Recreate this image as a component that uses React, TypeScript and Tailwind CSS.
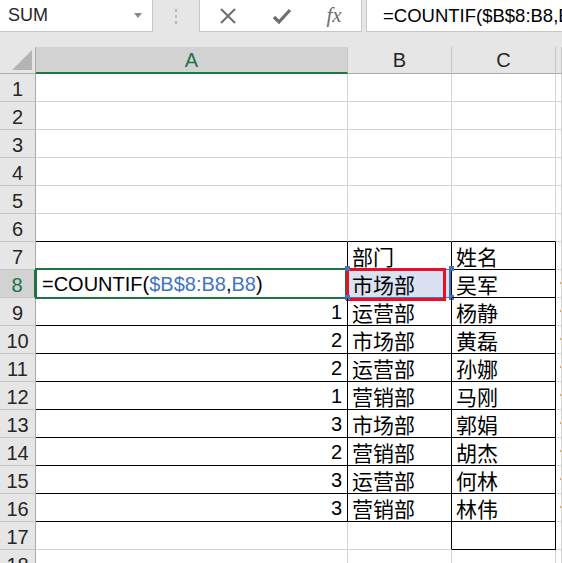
import React from 'react';

const latin = "font-['Liberation_Sans','Noto_Sans_CJK_SC',sans-serif]";
const cjk = "font-['Noto_Sans_CJK_SC',sans-serif]";

const counts = [1, 2, 2, 1, 3, 2, 3, 3];
const depts = ['运营部', '市场部', '运营部', '营销部', '市场部', '营销部', '运营部', '营销部'];
const names = ['杨静', '黄磊', '孙娜', '马刚', '郭娟', '胡杰', '何林', '林伟'];

const rows = Array.from({ length: 18 }, (_, i) => i + 1);

// which cells carry the black table borders
const blackBottom = (r: number, c: string) =>
  (c === 'A' || c === 'B') ? r >= 6 && r <= 16 : c === 'C' ? r >= 6 && r <= 17 : false;
const blackRight = (r: number, c: string) =>
  c === 'A' ? r >= 7 && r <= 16 : c === 'B' || c === 'C' ? r >= 7 && r <= 17 : false;

function cellClass(r: number, c: string) {
  return [
    'relative flex items-end border-r border-b border-[#d4d4d4] overflow-visible',
    blackBottom(r, c) ? 'border-b-black' : '',
    blackRight(r, c) ? 'border-r-black' : '',
  ].join(' ');
}

function Toolbar() {
  return (
    <div className="flex h-[32px] items-stretch bg-[#e6e6e6]">
      <div className="flex w-[153px] items-center justify-between border-r border-b border-[#c6c6c6] bg-white pl-[8px] pr-[10px]">
        <span className={`${latin} text-[18px] text-[#262626]`}>SUM</span>
        <svg width="8" height="5" viewBox="0 0 8 5"><path d="M0 0h8L4 5z" fill="#8a8a8a" /></svg>
      </div>
      <div className="flex w-[46px] flex-col items-center justify-center gap-[3px]">
        <span className="h-[3px] w-[2px] bg-[#b8b8b8]" />
        <span className="h-[3px] w-[2px] bg-[#b8b8b8]" />
        <span className="h-[3px] w-[2px] bg-[#b8b8b8]" />
      </div>
      <div className="flex w-[163px] items-center border-r border-b border-l border-[#c6c6c6] bg-white">
        <div className="flex w-[56px] justify-center">
          <svg width="18" height="18" viewBox="0 0 18 18"><path d="M2 2L16 16M16 2L2 16" stroke="#6e6e6e" strokeWidth="2" /></svg>
        </div>
        <div className="flex w-[52px] justify-center">
          <svg width="20" height="18" viewBox="0 0 20 18"><path d="M2 10l5 5L18 3" stroke="#6e6e6e" strokeWidth="3.2" fill="none" /></svg>
        </div>
        <div className="flex w-[52px] justify-center">
          <span className="font-['Liberation_Serif',serif] text-[21px] italic text-[#6e6e6e]">fx</span>
        </div>
      </div>
      <div className="ml-[4px] flex flex-1 items-center overflow-hidden border-b border-l border-[#c6c6c6] bg-white pl-[16px]">
        <span className={`${latin} whitespace-nowrap text-[18.5px] text-black`}>=COUNTIF($B$8:B8,B8)</span>
      </div>
    </div>
  );
}

function ColumnHeaders() {
  return (
    <>
      <div className="relative border-r border-b border-[#ababab] bg-[#e6e6e6]">
        <svg className="absolute right-[3px] bottom-[3px]" width="20" height="20" viewBox="0 0 20 20">
          <path d="M20 0V20H0z" fill="#b4b4b4" />
        </svg>
      </div>
      <div className={`${latin} flex items-center justify-center border-r border-b-2 border-r-[#c6c6c6] border-b-[#217346] bg-[#d2d2d2] text-[20px] text-[#217346]`}>A</div>
      {['B', 'C', 'D'].map((c) => (
        <div key={c} className={`${latin} flex items-center justify-center border-r border-b border-r-[#c6c6c6] border-b-[#ababab] bg-[#e6e6e6] text-[20px] text-[#262626]`}>
          {c === 'D' ? '' : c}
        </div>
      ))}
    </>
  );
}

function FormulaText() {
  return (
    <span className={`${latin} whitespace-nowrap pl-[6px] pb-[1px] text-[20px] leading-[24px] text-black`}>
      =COUNTIF(<span className="text-[#4472c4]">$B$8:B8</span>,<span className="text-[#4472c4]">B8</span>)
    </span>
  );
}

export default function App() {
  return (
    <div className="h-[563px] w-[562px] overflow-hidden bg-[#e6e6e6]">
      <Toolbar />
      <div className="h-[15px]" />
      <div className="grid grid-cols-[36px_312px_104px_104px_1fr] grid-rows-[27px_repeat(18,28px)] bg-white">
        <ColumnHeaders />
        {rows.map((r) => {
          const selected = r === 8;
          const idx = r - 9;
          const a = r >= 9 && r <= 16 ? counts[idx] : null;
          const b = r === 7 ? '部门' : r === 8 ? '市场部' : r >= 9 && r <= 16 ? depts[idx] : '';
          const c = r === 7 ? '姓名' : r === 8 ? '吴军' : r >= 9 && r <= 16 ? names[idx] : '';
          return (
            <React.Fragment key={r}>
              <div
                className={`${latin} flex items-center justify-center border-b pt-[3px] text-[20px] ${
                  selected
                    ? 'border-r-2 border-r-[#217346] border-b-[#c6c6c6] bg-[#d2d2d2] text-[#217346]'
                    : 'border-r border-r-[#ababab] border-b-[#c6c6c6] bg-[#e6e6e6] text-[#262626]'
                }`}
              >
                {r}
              </div>
              <div className={`${cellClass(r, 'A')} ${a !== null ? 'justify-end' : ''}`}>
                {a !== null && (
                  <span className={`${latin} pr-[5px] pb-[1px] text-[20px] leading-[24px] text-black`}>{a}</span>
                )}
                {selected && (
                  <>
                    <FormulaText />
                    <div className="pointer-events-none absolute top-[-2px] left-[-1px] h-[31px] w-[312px] border-2 border-[#217346]" />
                  </>
                )}
              </div>
              <div className={cellClass(r, 'B')}>
                {selected && (
                  <>
                    <div className="absolute top-[-1px] left-[-1px] h-[29px] w-[104px] border border-r-2 border-[#4472c4] bg-[#d9e1f2]" />
                    <div className="absolute top-[-2px] left-[-2px] h-[33px] w-[100px] border-[3px] border-[#e81123]" />
                    <span className="absolute top-[-4px] left-[-3px] h-[5px] w-[5px] bg-[#4472c4]" />
                    <span className="absolute top-[-4px] right-[-3px] h-[5px] w-[5px] bg-[#4472c4]" />
                    <span className="absolute bottom-[-3px] left-[-3px] h-[5px] w-[5px] bg-[#4472c4]" />
                    <span className="absolute bottom-[-3px] right-[-3px] h-[5px] w-[5px] bg-[#4472c4]" />
                  </>
                )}
                {b && <span className={`${cjk} relative pl-[4px] text-[21px] leading-[26px] text-black`}>{b}</span>}
              </div>
              <div className={cellClass(r, 'C')}>
                {c && <span className={`${cjk} pl-[4px] text-[21px] leading-[26px] text-black`}>{c}</span>}
              </div>
              <div className={cellClass(r, 'D')}>
                {r >= 8 && r <= 16 && (
                  <span className="absolute left-[4px] top-[12px] h-[2px] w-[1px] bg-[#e8a040]" />
                )}
              </div>
            </React.Fragment>
          );
        })}
      </div>
    </div>
  );
}
